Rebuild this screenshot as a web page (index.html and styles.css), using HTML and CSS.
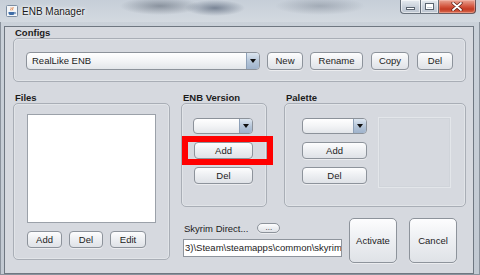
FILE: index.html
```html
<!DOCTYPE html>
<html lang="en">

<head>
    <meta charset="UTF-8">
    <meta name="viewport" content="width=device-width, initial-scale=1.0">
    <title>ENB Manager</title>
    <link rel="stylesheet" href="styles.css">
</head>

<body>
    <div class="window">
        <div class="titlebar">
            <span class="app-icon">
                <svg width="12" height="12" viewBox="0 0 12 12">
                    <rect x="0.5" y="0.5" width="11" height="11" rx="1" fill="#f4f6f8" stroke="#7d8ea3"/>
                    <path d="M5 2.5c1 1-1 1.5 0 3M6.8 2c1 1-1 1.8 0 3.3" stroke="#e0712b" stroke-width="0.9" fill="none"/>
                    <path d="M2.5 7h6v1.2c0 1-1 1.8-2 1.8h-2c-1 0-2-.8-2-1.8z" fill="#3f6ea8"/>
                    <path d="M8.5 7.4h.8c.7 0 .7 1.3 0 1.3h-.8" stroke="#3f6ea8" stroke-width="0.7" fill="none"/>
                </svg>
            </span>
            <span class="title">ENB Manager</span>
            <div class="controls">
                <span class="ctl min"><span class="min-bar"></span></span>
                <span class="ctl max"><span class="max-box"></span></span>
                <span class="ctl close">
                    <svg width="12" height="9" viewBox="0 0 12 9">
                        <path d="M2 1l8 7M10 1l-8 7" stroke="#5a1e14" stroke-width="3.2" stroke-linecap="round"/>
                        <path d="M2 1l8 7M10 1l-8 7" stroke="#fff" stroke-width="1.8" stroke-linecap="round"/>
                    </svg>
                </span>
            </div>
        </div>

        <div class="content">
            <div class="group-title configs-title">Configs</div>
            <div class="panel configs-panel">
                <div class="combo config-combo">
                    <span class="combo-text">RealLike ENB</span>
                    <span class="combo-arrow"><span class="tri"></span></span>
                </div>
                <button class="btn new">New</button>
                <button class="btn rename">Rename</button>
                <button class="btn copy">Copy</button>
                <button class="btn del-config">Del</button>
            </div>

            <div class="lower">
                <div class="files">
                    <div class="group-title">Files</div>
                    <div class="panel files-panel">
                        <div class="file-list"></div>
                        <div class="file-buttons">
                            <button class="btn small add">Add</button>
                            <button class="btn small del">Del</button>
                            <button class="btn small edit">Edit</button>
                        </div>
                    </div>
                </div>

                <div class="right">
                    <div class="top-row">
                        <div class="enb">
                            <div class="group-title">ENB Version</div>
                            <div class="panel enb-panel">
                                <div class="combo side-combo enb-combo">
                                    <span class="combo-text"></span>
                                    <span class="combo-arrow"><span class="tri"></span></span>
                                </div>
                                <button class="btn small enb-btn">Add</button>
                                <button class="btn small enb-btn">Del</button>
                                <div class="highlight"></div>
                            </div>
                        </div>

                        <div class="palette">
                            <div class="group-title">Palette</div>
                            <div class="panel palette-panel">
                                <div class="palette-controls">
                                    <div class="combo side-combo palette-combo">
                                        <span class="combo-text"></span>
                                        <span class="combo-arrow"><span class="tri"></span></span>
                                    </div>
                                    <button class="btn small palette-btn">Add</button>
                                    <button class="btn small palette-btn">Del</button>
                                </div>
                                <div class="preview"></div>
                            </div>
                        </div>
                    </div>

                    <div class="bottom-row">
                        <div class="dir">
                            <div class="dir-head">
                                <span class="dir-label">Skyrim Direct...</span>
                                <button class="btn tiny">...</button>
                            </div>
                            <div class="path">3)\Steam\steamapps\common\skyrim</div>
                        </div>
                        <button class="btn big activate">Activate</button>
                        <button class="btn big cancel">Cancel</button>
                    </div>
                </div>
            </div>
        </div>
    </div>
</body>

</html>
```

FILE: styles.css
```css
* {
    box-sizing: border-box;
    margin: 0;
    padding: 0;
}

body {
    background: #c9d0d8;
    font-family: "Liberation Sans", Arial, sans-serif;
    font-size: 9.5px;
    color: #1c1c1c;
}

.window {
    width: 480px;
    height: 275px;
    background: linear-gradient(180deg, #cbd2da, #c2c9d2);
    box-shadow: inset 0 0 0 1px #8a929c;
    overflow: hidden;
}

/* title bar with the blurred glass behind it */
.titlebar {
    height: 22px;
    display: flex;
    align-items: center;
    padding-left: 6px;
    background:
        radial-gradient(ellipse 40px 9px at 160px 6px, rgba(60, 70, 85, 0.45), transparent),
        radial-gradient(ellipse 30px 8px at 215px 8px, rgba(40, 55, 80, 0.5), transparent),
        radial-gradient(ellipse 45px 9px at 320px 6px, rgba(90, 100, 115, 0.35), transparent),
        linear-gradient(180deg, #c6ced8, #d3d9e0);
}

.app-icon {
    width: 12px;
    height: 12px;
    display: flex;
}

.title {
    margin-left: 4px;
    font-size: 10px;
    color: #1a1a1a;
    text-shadow: 0 0 5px #fff, 0 0 3px #fff;
}

.controls {
    margin-left: auto;
    margin-right: 4px;
    align-self: flex-start;
    display: flex;
    height: 14px;
}

.ctl {
    display: flex;
    align-items: center;
    justify-content: center;
    height: 14px;
    border: 1px solid rgba(55, 65, 78, 0.7);
    border-top: none;
}

.min,
.max {
    width: 20px;
    background: linear-gradient(180deg, #e6ebf0, #c8d0da 55%, #bcc5d0);
    box-shadow: inset 0 0 0 1px rgba(255, 255, 255, 0.55);
}

.min {
    border-bottom-left-radius: 4px;
    border-right: none;
}

.max {
    width: 19px;
}

.min-bar {
    width: 9px;
    height: 3px;
    margin-top: 4px;
    background: #fff;
    border: 1px solid #5b6571;
}

.max-box {
    width: 9px;
    height: 7px;
    border: 1px solid #5b6571;
    box-shadow: inset 0 0 0 1px #fff, inset 0 2px 0 1px #fff;
}

.close {
    width: 37px;
    border-left: none;
    border-bottom-right-radius: 4px;
    background: linear-gradient(180deg, #e9a595, #d3553e 50%, #c43b24 70%, #d86a4e);
    box-shadow: inset 0 0 0 1px rgba(255, 210, 200, 0.4);
}

/* client area */
.content {
    width: 468px;
    height: 246px;
    margin-left: 5px;
    padding: 0 7px 0 8px;
    background: #d6d9df;
    box-shadow: 0 0 0 1px #6f7781;
}

.group-title {
    height: 11px;
    line-height: 11px;
    padding-left: 2px;
    font-weight: bold;
}

.configs-title {
    margin-top: 5px;
}

.panel {
    position: relative;
    border: 1px solid #a9aeb6;
    border-radius: 5px;
    box-shadow: inset 0 0 0 1px #e1e4e8;
}

.configs-panel {
    height: 44px;
    display: flex;
    align-items: center;
    padding-left: 12px;
    padding-top: 1px;
}

/* combo boxes */
.combo {
    display: flex;
    border: 1px solid #8c929a;
    border-radius: 4px;
    background: linear-gradient(180deg, #ffffff, #f3f4f6 50%, #e3e6ea);
    overflow: hidden;
}

.config-combo {
    width: 234px;
    height: 18px;
    margin-right: 7px;
}

.combo-text {
    flex: 1;
    line-height: 16px;
    padding-left: 5px;
}

.combo-arrow {
    width: 13px;
    display: flex;
    align-items: center;
    justify-content: center;
    border-left: 1px solid #8ea1b8;
    background: linear-gradient(180deg, #dde6f0, #b3c4d8 55%, #9fb3cc);
}

.tri {
    width: 0;
    height: 0;
    border-left: 3px solid transparent;
    border-right: 3px solid transparent;
    border-top: 4px solid #111;
}

.side-combo {
    height: 16px;
}

/* buttons */
.btn {
    height: 18px;
    border: 1px solid #8d939b;
    border-radius: 4px;
    background: linear-gradient(180deg, #fdfdfe, #eef0f3 45%, #dfe2e7);
    box-shadow: 0 1px 0 rgba(255, 255, 255, 0.5);
    font-family: "Liberation Sans", Arial, sans-serif;
    font-size: 9.5px;
    color: #1c1c1c;
    text-align: center;
}

.new {
    width: 36px;
}

.rename {
    width: 53px;
    margin-left: 7px;
}

.copy {
    width: 38px;
    margin-left: 8px;
}

.del-config {
    width: 36px;
    margin-left: 8px;
}

.small {
    height: 17px;
}

/* lower part */
.lower {
    display: flex;
    margin-top: 10px;
}

.files {
    width: 157px;
}

.files-panel {
    height: 157px;
    padding: 10px 13px 0;
}

.file-list {
    height: 109px;
    background: #fff;
    border: 1px solid #9ba1a9;
}

.file-buttons {
    display: flex;
    gap: 7px;
    margin-top: 8px;
}

.add {
    width: 35px;
}

.del {
    width: 34px;
}

.edit {
    width: 36px;
}

.right {
    width: 285px;
    margin-left: 11px;
}

.top-row {
    display: flex;
}

.enb {
    width: 86px;
}

.enb-panel {
    height: 104px;
    display: flex;
    flex-direction: column;
    align-items: flex-start;
    gap: 8px;
    padding: 14px 0 0 11px;
}

.enb-combo {
    width: 60px;
}

.enb-btn {
    width: 59px;
    margin-left: 1px;
}

/* red annotation box over the Add button */
.highlight {
    position: absolute;
    left: 0;
    top: 32px;
    width: 91px;
    height: 29px;
    border: 6px solid #ff0000;
}

.palette {
    width: 182px;
    margin-left: 17px;
}

.palette-panel {
    height: 104px;
    display: flex;
    align-items: flex-start;
    padding: 14px 0 0 17px;
}

.palette-controls {
    display: flex;
    flex-direction: column;
    gap: 8px;
}

.palette-combo,
.palette-btn {
    width: 65px;
}

.preview {
    width: 73px;
    height: 71px;
    margin: -1px 0 0 11px;
    border: 1px solid #e3e6ea;
    box-shadow: inset 0 0 0 1px #d0d4da;
}

.bottom-row {
    display: flex;
    align-items: flex-start;
    padding: 11px 0 0 2px;
}

.dir {
    width: 159px;
}

.dir-head {
    display: flex;
    align-items: center;
    height: 10px;
    margin-top: 5px;
    padding-left: 1px;
}

.tiny {
    width: 23px;
    height: 10px;
    margin-left: 9px;
    border-radius: 5px;
    font-size: 8px;
    line-height: 6px;
}

.path {
    height: 18px;
    margin-top: 6px;
    line-height: 16px;
    padding-left: 1px;
    background: #fff;
    border: 1px solid #8e949c;
    white-space: nowrap;
    overflow: hidden;
}

.big {
    width: 48px;
    height: 45px;
    border-radius: 5px;
}

.activate {
    margin-left: 7px;
}

.cancel {
    margin-left: 12px;
}
```
